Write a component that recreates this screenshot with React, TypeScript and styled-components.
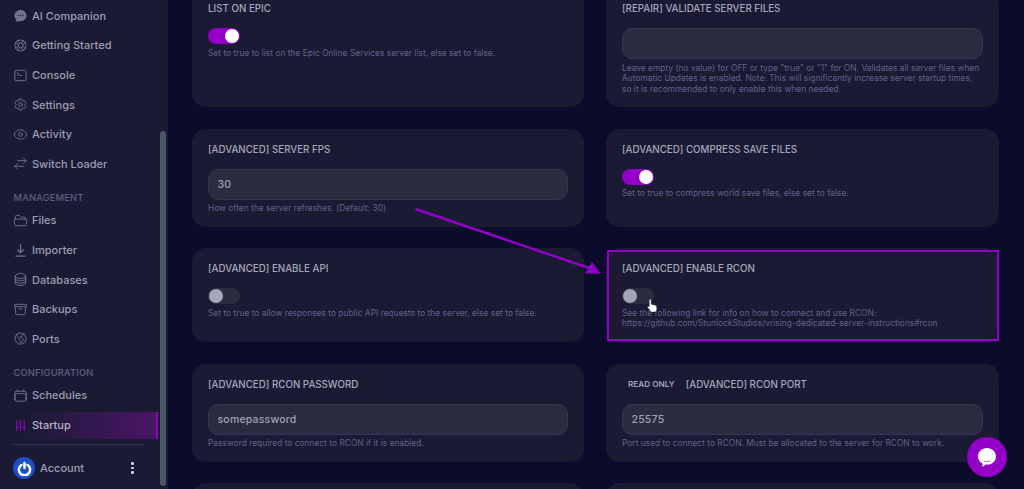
import React from "react";
import styled, {createGlobalStyle} from "styled-components";
import {
  HiChatBubbleOvalLeftEllipsis,
  HiOutlineLifebuoy,
  HiOutlineCommandLine,
  HiOutlineCog6Tooth,
  HiOutlineEye,
  HiOutlineArrowsRightLeft,
  HiOutlineFolderOpen,
  HiOutlineCircleStack,
  HiOutlineArchiveBox,
  HiOutlineGlobeAmericas,
  HiOutlineCalendar,
  HiOutlineAdjustmentsVertical,
} from "react-icons/hi2";

const GlobalStyle = createGlobalStyle`
  html, body {
    margin: 0;
    height: 100%;
    overflow: hidden;
    background: #0b0b2b;
    font-family: Inter, "Liberation Sans", sans-serif;
  }
  #root {
    height: 100%;
  }
`;

const Page = styled.div`
  position: relative;
  display: flex;
  width: 1024px;
  height: 489px;
  overflow: hidden;
`;

const Sidebar = styled.aside`
  flex: none;
  display: flex;
  width: 168px;
  height: 100%;
  background: #1a1b33;
`;

const Nav = styled.nav`
  flex: none;
  width: 158px;
  display: flex;
  flex-direction: column;
  padding-top: 2.4px;
`;

const Track = styled.div`
  flex: none;
  width: 10px;
  display: flex;
  flex-direction: column;
  align-items: flex-start;
  padding: 131px 0 0 2px;
  box-sizing: border-box;
`;

const Thumb = styled.div`
  width: 6px;
  flex: 1;
  margin-bottom: 3px;
  border-radius: 3px;
  background: #4a5568;
`;

const NavItem = styled.a<{$active?: boolean}>`
  display: flex;
  align-items: center;
  gap: 4px;
  height: 27px;
  margin-bottom: 2.6px;
  padding-left: 13px;
  box-sizing: border-box;
  font-size: 11px;
  font-weight: 500;
  color: ${(p) => (p.$active ? "#b4b4c4" : "#9c9cb0")};
  background: ${(p) =>
    p.$active
      ? "linear-gradient(90deg, #1a1b33 15%, #4a1566 100%)"
      : "transparent"};
  border-right: ${(p) => (p.$active ? "2px solid #8a06b8" : "none")};
  svg {
    flex: none;
    width: 15px;
    height: 15px;
    color: ${(p) => (p.$active ? "#9a06cf" : "#72728f")};
  }
`;

const Section = styled.div`
  height: 14px;
  margin: 11px 0 2px;
  padding-left: 13.5px;
  font-size: 9.3px;
  line-height: 14px;
  font-weight: 500;
  letter-spacing: 0.2px;
  color: #5f5f7e;
`;

const Divider = styled.hr`
  width: 131px;
  height: 1px;
  margin: 3px 0 0 13px;
  border: none;
  background: #37384e;
`;

const Account = styled.div`
  display: flex;
  align-items: center;
  gap: 5px;
  padding: 12px 0 0 13px;
  font-size: 11px;
  font-weight: 500;
  color: #9c9cb0;
`;

const Avatar = styled.div`
  flex: none;
  display: flex;
  align-items: center;
  justify-content: center;
  width: 22px;
  height: 22px;
  border-radius: 50%;
  background: #1d4fc4;
`;

const Dots = styled.div`
  display: flex;
  flex-direction: column;
  gap: 2px;
  margin-left: 42px;
  span {
    width: 2.5px;
    height: 2.5px;
    border-radius: 50%;
    background: #d6d6e0;
  }
`;

const Main = styled.main`
  flex: 1;
  padding: 0 25px 0 24px;
  height: 100%;
  overflow: hidden;
`;

const Grid = styled.div`
  display: grid;
  grid-template-columns: 392px 393px;
  column-gap: 22px;
  row-gap: 21.5px;
  margin-top: -12px;
`;

const Card = styled.section<{$height: number; $marked?: boolean}>`
  position: relative;
  height: ${(p) => p.$height}px;
  box-sizing: border-box;
  padding: 14px 16px 0;
  background: #1a1b33;
  border-radius: 14px;
  ${(p) =>
    p.$marked &&
    `&::after {
      content: "";
      position: absolute;
      inset: 2px 0 1px 1px;
      border: 2px solid #9400c8;
    }`}
`;

const TitleRow = styled.div`
  display: flex;
  align-items: center;
  gap: 11px;
  height: 13px;
  margin: 0 0 13px;
`;

const Title = styled.h3`
  margin: 0;
  font-size: 9.75px;
  line-height: 13px;
  font-weight: 500;
  color: #a6a6ba;
  white-space: nowrap;
`;

const ReadOnly = styled.span`
  padding-left: 6px;
  font-size: 8.2px;
  font-weight: 600;
  color: #a2a2b6;
  white-space: nowrap;
`;

const Input = styled.div`
  display: flex;
  align-items: center;
  height: 31px;
  box-sizing: border-box;
  padding: 0 8.5px;
  background: #2b2c40;
  border: 1px solid #36374c;
  border-radius: 10px;
  font-size: 10.5px;
  font-weight: 500;
  letter-spacing: 0.2px;
  color: #a0a0b0;
`;

const Hint = styled.p`
  margin: 3.500px 0 0;
  font-size: 8.3px;
  line-height: 10.7px;
  letter-spacing: 0.05px;
  color: #62628a;
`;

const Toggle = styled.div<{$on?: boolean}>`
  display: flex;
  align-items: center;
  justify-content: ${(p) => (p.$on ? "flex-end" : "flex-start")};
  width: 32px;
  height: 16px;
  padding: 0 1px;
  box-sizing: border-box;
  border-radius: 8px;
  background: ${(p) => (p.$on ? "#9400c8" : "#2b2c40")};
  & > span {
    width: 14px;
    height: 14px;
    border-radius: 50%;
    background: ${(p) => (p.$on ? "#ffffff" : "#a5a5bb")};
  }
`;

const ChatButton = styled.button`
  position: absolute;
  left: 967px;
  top: 437px;
  display: flex;
  align-items: center;
  justify-content: center;
  width: 40px;
  height: 40px;
  padding: 0;
  border: none;
  border-radius: 50%;
  background: #9400c8;
`;

const Overlay = styled.svg`
  position: absolute;
  left: 0;
  top: 0;
  pointer-events: none;
`;

const Cursor = styled.svg`
  position: absolute;
  left: 647px;
  top: 299px;
`;

type Item = {label: string; icon: React.ReactNode; active?: boolean};

function ImportIcon() {
  return (
    <svg viewBox="0 0 24 24" fill="none" stroke="currentColor" strokeWidth="2">
      <path d="M12 2v13M7 10.5l5 5 5-5M4 21h16" />
    </svg>
  );
}

const general: Item[] = [
  {label: "AI Companion", icon: <HiChatBubbleOvalLeftEllipsis />},
  {label: "Getting Started", icon: <HiOutlineLifebuoy />},
  {label: "Console", icon: <HiOutlineCommandLine />},
  {label: "Settings", icon: <HiOutlineCog6Tooth />},
  {label: "Activity", icon: <HiOutlineEye />},
  {label: "Switch Loader", icon: <HiOutlineArrowsRightLeft />},
];

const management: Item[] = [
  {label: "Files", icon: <HiOutlineFolderOpen />},
  {label: "Importer", icon: <ImportIcon />},
  {label: "Databases", icon: <HiOutlineCircleStack />},
  {label: "Backups", icon: <HiOutlineArchiveBox />},
  {label: "Ports", icon: <HiOutlineGlobeAmericas />},
];

const configuration: Item[] = [
  {label: "Schedules", icon: <HiOutlineCalendar />},
  {label: "Startup", icon: <HiOutlineAdjustmentsVertical />, active: true},
];

function renderItems(items: Item[]) {
  return items.map((item) => (
    <NavItem key={item.label} $active={item.active}>
      {item.icon}
      {item.label}
    </NavItem>
  ));
}

export default function App() {
  return (
    <Page>
      <GlobalStyle />
      <Sidebar>
        <Nav>
          {renderItems(general)}
          <Section>MANAGEMENT</Section>
          {renderItems(management)}
          <Section>CONFIGURATION</Section>
          {renderItems(configuration)}
          <Divider />
          <Account>
            <Avatar>
              <svg width="15" height="15" viewBox="0 0 24 24" fill="none" stroke="#fff" strokeWidth="4" strokeLinecap="round">
                <path d="M7 6.5a9 9 0 1 0 10 0M12 3v8" />
              </svg>
            </Avatar>
            Account
            <Dots>
              <span />
              <span />
              <span />
            </Dots>
          </Account>
        </Nav>
        <Track>
          <Thumb />
        </Track>
      </Sidebar>
      <Main>
        <Grid>
          <Card $height={119}>
            <TitleRow>
              <Title>LIST ON EPIC</Title>
            </TitleRow>
            <Toggle $on>
              <span />
            </Toggle>
            <Hint>Set to true to list on the Epic Online Services server list, else set to false.</Hint>
          </Card>
          <Card $height={119}>
            <TitleRow>
              <Title>[REPAIR] VALIDATE SERVER FILES</Title>
            </TitleRow>
            <Input />
            <Hint>
              Leave empty (no value) for OFF or type "true" or "1" for ON. Validates all server files when Automatic
              Updates is enabled. Note: This will significantly increase server startup times, so it is recommended to
              only enable this when needed.
            </Hint>
          </Card>
          <Card $height={98}>
            <TitleRow>
              <Title>[ADVANCED] SERVER FPS</Title>
            </TitleRow>
            <Input>30</Input>
            <Hint>How often the server refreshes. (Default: 30)</Hint>
          </Card>
          <Card $height={98}>
            <TitleRow>
              <Title>[ADVANCED] COMPRESS SAVE FILES</Title>
            </TitleRow>
            <Toggle $on>
              <span />
            </Toggle>
            <Hint>Set to true to compress world save files, else set to false.</Hint>
          </Card>
          <Card $height={94}>
            <TitleRow>
              <Title>[ADVANCED] ENABLE API</Title>
            </TitleRow>
            <Toggle>
              <span />
            </Toggle>
            <Hint>Set to true to allow responses to public API requests to the server, else set to false.</Hint>
          </Card>
          <Card $height={94} $marked>
            <TitleRow>
              <Title>[ADVANCED] ENABLE RCON</Title>
            </TitleRow>
            <Toggle>
              <span />
            </Toggle>
            <Hint>
              See the following link for info on how to connect and use RCON:
              <br />
              https://github.com/StunlockStudios/vrising-dedicated-server-instructions#rcon
            </Hint>
          </Card>
          <Card $height={98}>
            <TitleRow>
              <Title>[ADVANCED] RCON PASSWORD</Title>
            </TitleRow>
            <Input>somepassword</Input>
            <Hint>Password required to connect to RCON if it is enabled.</Hint>
          </Card>
          <Card $height={98}>
            <TitleRow>
              <ReadOnly>READ ONLY</ReadOnly>
              <Title>[ADVANCED] RCON PORT</Title>
            </TitleRow>
            <Input>25575</Input>
            <Hint>Port used to connect to RCON. Must be allocated to the server for RCON to work.</Hint>
          </Card>
          <Card $height={60} />
          <Card $height={60} />
        </Grid>
      </Main>
      <Overlay width="1024" height="489" viewBox="0 0 1024 489">
        <path d="M415.5 209 L592 269" stroke="#9400c8" strokeWidth="2.4" fill="none" />
        <path d="M600.5 273.5 L585 273.5 L592 262 Z" fill="#9400c8" />
      </Overlay>
      <Cursor width="11" height="14" viewBox="0 0 11 14">
        <path
          d="M2.2 1.2c0-1.2 2-1.2 2 0v4l3.4.8c1.4.3 2.2 1 2.2 2.4v2L8.8 13H4L.6 8.6c-.6-.9.5-1.8 1.4-1l.2.2z"
          fill="#fff"
          stroke="#222"
          strokeWidth="0.5"
        />
      </Cursor>
      <ChatButton>
        <svg width="24" height="24" viewBox="0 0 24 24">
          <path
            d="M12 3c5 0 9 3.6 9 8.4 0 4.6-3.8 8.2-8.6 8.2-.6 0-1 0-1.5-.1L7.4 22v-3.6C4.7 17 3 14.400 3 11.400 3 6.600 7 3 12 3z"
            fill="#fff"
          />
          <path d="M8.500 15.200c2 1.300 5 1.300 7 0-.6 2-6.400 2-7 0z" fill="#9400c8" />
        </svg>
      </ChatButton>
    </Page>
  );
}
